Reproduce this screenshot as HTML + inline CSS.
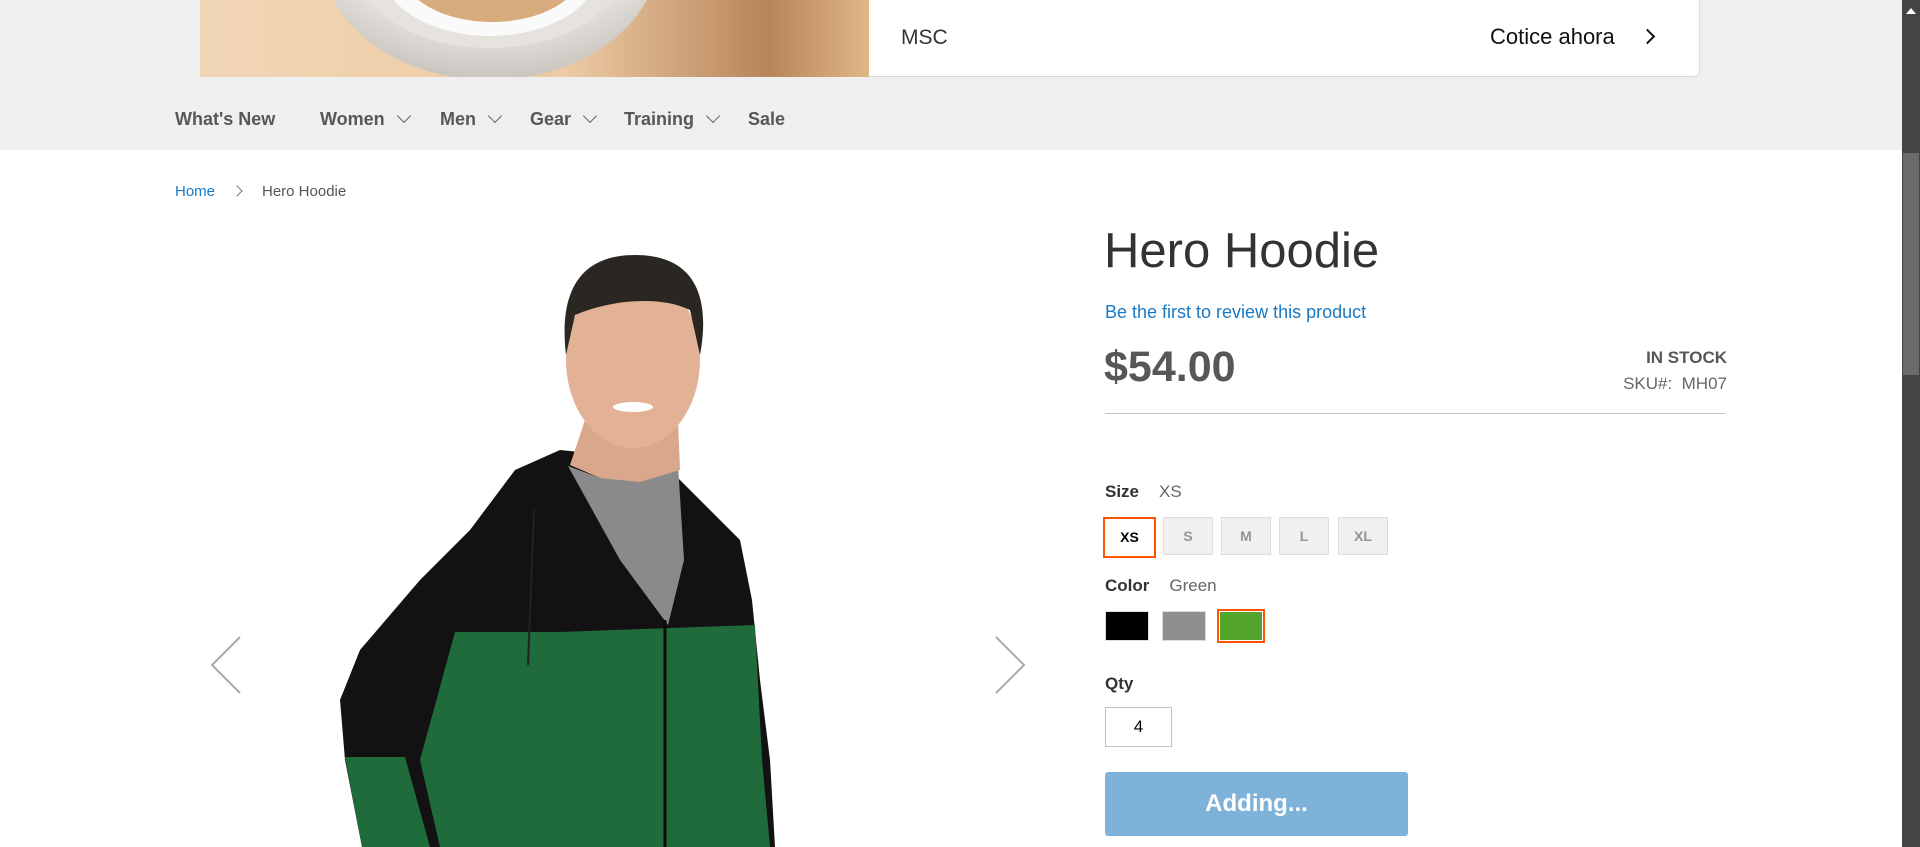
<!DOCTYPE html>
<html><head><meta charset="utf-8"><style>
*{margin:0;padding:0;box-sizing:border-box}
body{width:1920px;height:847px;overflow:hidden;background:#fff;font-family:"Liberation Sans",sans-serif;position:relative;color:#333}
.a{position:absolute;white-space:nowrap}
.nav{font-weight:bold;font-size:18px;color:#575757;top:109px}
.chev{display:inline-block;width:10px;height:10px;border-right:1.6px solid #666;border-bottom:1.6px solid #666;transform:rotate(45deg);margin-left:14px;position:relative;top:-4px}
.sz{position:absolute;top:517px;height:38px;width:50px;background:#f0f0f0;border:1px solid #ddd;color:#949494;font-weight:bold;font-size:14px;text-align:center;line-height:36px}
</style></head><body>
<div class="a" style="left:0;top:0;width:1920px;height:150px;background:#efefef"></div>
<!-- banner -->
<div class="a" style="left:200px;top:0;width:1500px;height:77px;background:#fff;border-bottom:1px solid #d8d8d8;border-right:1px solid #ddd;border-radius:0 0 6px 0"></div>
<svg class="a" style="left:200px;top:0" width="669" height="77">
<defs><linearGradient id="bg" x1="0" x2="1"><stop offset="0" stop-color="#f1d6b6"/><stop offset=".55" stop-color="#eccaa3"/><stop offset=".85" stop-color="#b8855a"/><stop offset="1" stop-color="#e0b688"/></linearGradient>
<radialGradient id="cup" cx=".5" cy=".3" r=".7"><stop offset=".6" stop-color="#f4f3f1"/><stop offset="1" stop-color="#c9c4be"/></radialGradient></defs>
<rect width="669" height="77" fill="url(#bg)"/>
<ellipse cx="290" cy="-50" rx="170" ry="130" fill="url(#cup)"/>
<ellipse cx="290" cy="-30" rx="130" ry="78" fill="#e6e2de"/>
<ellipse cx="290" cy="-30" rx="108" ry="66" fill="#fafafa"/>
<ellipse cx="292" cy="-30" rx="90" ry="52" fill="#d8ab7c"/>
</svg>
<div class="a" style="left:901px;top:26px;font-size:21px;color:#333">MSC</div>
<div class="a" style="left:1490px;top:24px;font-size:22px;color:#111">Cotice ahora</div>
<div class="a" style="left:1642px;top:31px;width:11px;height:11px;border-right:2px solid #111;border-top:2px solid #111;transform:rotate(45deg)"></div>
<!-- nav -->
<div class="a nav" style="left:175px">What's New</div>
<div class="a nav" style="left:320px">Women<span class="chev"></span></div>
<div class="a nav" style="left:440px">Men<span class="chev"></span></div>
<div class="a nav" style="left:530px">Gear<span class="chev"></span></div>
<div class="a nav" style="left:624px">Training<span class="chev"></span></div>
<div class="a nav" style="left:748px">Sale</div>
<!-- scrollbar -->
<div class="a" style="left:1902px;top:0;width:18px;height:847px;background:#444"></div>
<div class="a" style="left:1903px;top:153px;width:16px;height:222px;background:#6a6a6a"></div>
<div class="a" style="left:1906px;top:8px;width:0;height:0;border-left:5px solid transparent;border-right:5px solid transparent;border-bottom:6px solid #fff"></div>
<!-- breadcrumb -->
<div class="a" style="left:175px;top:183px;font-size:15px;color:#1979c3">Home</div>
<div class="a" style="left:233px;top:187px;width:8px;height:8px;border-right:1.3px solid #777;border-top:1.3px solid #777;transform:rotate(45deg)"></div>
<div class="a" style="left:262px;top:183px;font-size:15px;color:#555">Hero Hoodie</div>
<!-- product image -->
<svg class="a" style="left:0;top:0" width="1100" height="847">
<polyline points="240,637 212,665 240,693" fill="none" stroke="#aaa" stroke-width="2"/>
<polyline points="996,637 1024,665 996,693" fill="none" stroke="#aaa" stroke-width="2"/>
<path d="M560,450 L515,470 L470,530 L420,580 L360,650 L340,700 L345,760 L362,847 L775,847 L770,760 L760,680 L752,600 L740,540 L700,500 L660,460 Z" fill="#121212"/>
<path d="M560,632 L755,625 L762,760 L770,847 L440,847 L420,760 L455,632 Z" fill="#1f6b3c"/>
<path d="M345,757 L405,757 L430,847 L362,847 Z" fill="#1f6b3c"/>
<path d="M568,466 L600,478 L640,478 L678,465 L684,560 L668,625 L620,560 Z" fill="#8a8a8a"/>
<line x1="665" y1="620" x2="665" y2="847" stroke="#0b0b0b" stroke-width="3"/>
<line x1="534" y1="510" x2="528" y2="665" stroke="#222" stroke-width="2"/>
<path d="M585,420 L678,420 L680,470 L640,482 L600,478 L570,465 Z" fill="#d9a88c"/>
<ellipse cx="633" cy="360" rx="67" ry="88" fill="#e3b196"/>
<path d="M566,355 C558,285 585,255 635,255 C690,255 712,290 700,355 L690,310 C660,295 610,300 575,315 Z" fill="#2a2622"/>
<ellipse cx="633" cy="407" rx="20" ry="5" fill="#fff"/>
</svg>
<!-- right column -->
<div class="a" style="left:1104px;top:223px;font-size:49px;color:#333;font-weight:300">Hero Hoodie</div>
<div class="a" style="left:1105px;top:302px;font-size:18px;color:#1979c3">Be the first to review this product</div>
<div class="a" style="left:1104px;top:343px;font-size:43px;font-weight:bold;color:#575757">$54.00</div>
<div class="a" style="right:193px;top:348px;font-size:17px;font-weight:bold;color:#575757">IN STOCK</div>
<div class="a" style="right:193px;top:374px;font-size:17px;color:#666">SKU#:&nbsp; MH07</div>
<div class="a" style="left:1105px;top:413px;width:620px;height:1px;background:#c1c1c1"></div>
<div class="a" style="left:1105px;top:482px;font-size:17px"><b>Size</b><span style="color:#666;margin-left:20px">XS</span></div>
<div class="sz" style="left:1103px;width:53px;height:41px;background:#fff;border:2px solid #ff5501;color:#000;line-height:37px">XS</div>
<div class="sz" style="left:1163px">S</div>
<div class="sz" style="left:1221px">M</div>
<div class="sz" style="left:1279px">L</div>
<div class="sz" style="left:1338px">XL</div>
<div class="a" style="left:1105px;top:576px;font-size:17px"><b>Color</b><span style="color:#666;margin-left:20px">Green</span></div>
<div class="a" style="left:1105px;top:611px;width:44px;height:30px;background:#000;border:1px solid #ddd"></div>
<div class="a" style="left:1162px;top:611px;width:44px;height:30px;background:#8f8f8f;border:1px solid #ddd"></div>
<div class="a" style="left:1217px;top:609px;width:48px;height:34px;border:2px solid #ff5501;background:#fff;padding:1px"><div style="width:100%;height:100%;background:#53a42b"></div></div>
<div class="a" style="left:1105px;top:674px;font-size:17px;font-weight:bold;color:#333">Qty</div>
<div class="a" style="left:1105px;top:707px;width:67px;height:40px;border:1px solid #c2c2c2;text-align:center;line-height:38px;font-size:17px;color:#000">4</div>
<div class="a" style="left:1105px;top:772px;width:303px;height:64px;background:#7fb2d8;border-radius:3px;color:#fff;font-weight:bold;font-size:24px;text-align:center;line-height:64px">Adding...</div>
</body></html>
